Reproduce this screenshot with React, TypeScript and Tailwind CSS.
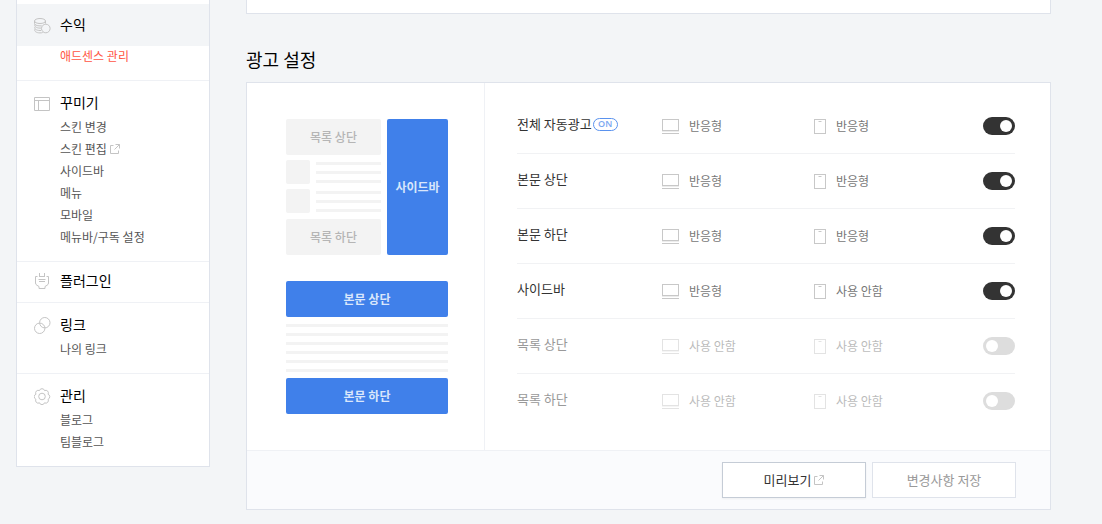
import type { ReactNode } from "react";

type MenuItem = { label: string; active?: boolean; external?: boolean };

type MenuSection = {
  title: string;
  icon: ReactNode;
  active?: boolean;
  items: MenuItem[];
};

type AdSlot = {
  id: string;
  label: string;
  auto?: boolean;
  desktop: string;
  mobile: string;
  enabled: boolean;
};

const iconProps = {
  width: 17,
  height: 17,
  viewBox: "0 0 17 17",
  fill: "none",
  stroke: "currentColor",
  "aria-hidden": true,
};

const CoinsIcon = () => (
  <svg {...iconProps}>
    <ellipse cx="6" cy="4" rx="5.500" ry="2.500" />
    <path d="M.5 4v2.500c0 1.300 2.400 2.400 5.500 2.400.6 0 1.200 0 1.700-.1M11.500 4v2.500M.9 7.300c-.9 2 1.400 3.800 5.100 3.800h1M.9 9.800c-.9 2 1.400 3.700 5.100 3.700h1M.9 12.200c-.9 2 1.400 3.700 5.100 3.700 1 0 1.900-.1 2.700-.4" />
    <circle cx="11.800" cy="11.500" r="4.300" />
  </svg>
);

const LayoutIcon = () => (
  <svg {...iconProps}>
    <path d="M.5 2.500h15v13H.5zM.5 5.500h15M4.500 5.500v10" />
  </svg>
);

const PlugIcon = () => (
  <svg {...iconProps}>
    <path d="M5.500 0v4M10.500 0v4M3.500 3.500h-2v6.500q0 1.500 1.500 2.300l2 1.200v2h6v-2l2-1.200q1.500-.8 1.500-2.300v-6.500h-2M5.500 3.500h5M4.500 6.500h7M5 8.500h6" />
  </svg>
);

const LinkIcon = () => (
  <svg {...iconProps}>
    <circle cx="10.800" cy="5.700" r="5.200" />
    <circle cx="5.700" cy="11.300" r="5.200" />
  </svg>
);

const GearIcon = () => (
  <svg {...iconProps}>
    <circle cx="8" cy="8.500" r="3.300" />
    <path
      strokeLinejoin="round"
      d="M6.300 1.200q1.700-1 3.400 0l.8 1.400 1.700-.3q1.900.5 2.200 2.300l-.3 1.700 1.200.8q1 1.600 0 3.200l-1.200 1 .3 1.600q-.4 1.800-2.200 2.300l-1.700-.4-.8 1.300q-1.700 1-3.400 0l-.8-1.300-1.700.4q-1.800-.5-2.200-2.300l.3-1.600-1.200-1q-1-1.600 0-3.200l1.200-.8-.3-1.700q.3-1.800 2.200-2.300l1.700.3z"
    />
  </svg>
);

const ExternalIcon = () => (
  <svg
    className="text-[#c4c4c4]"
    width="10"
    height="10"
    viewBox="0 0 10 10"
    fill="none"
    stroke="currentColor"
    aria-hidden
  >
    <path d="M3.500 1.500h-3v8h8v-3M5.500.5h4v4M9.500.5l-5 5" />
  </svg>
);

const DesktopIcon = () => (
  <svg width="17" height="15" viewBox="0 0 17 15" fill="none" aria-hidden>
    <path d="M1 11.500h15" stroke="#e0e0e0" />
    <rect x=".5" y=".5" width="16" height="11" stroke="#c8c8c8" />
    <path d="M0 12.500h17" stroke="#ececec" />
    <path d="M0 14.500h17" stroke="#c8c8c8" />
  </svg>
);

const MobileIcon = () => (
  <svg width="12" height="15" viewBox="0 0 12 15" fill="none" aria-hidden>
    <rect x=".5" y=".5" width="11" height="14" stroke="#c8c8c8" />
    <path d="M4.500 2.500h3" stroke="#c8c8c8" />
  </svg>
);

const sections: MenuSection[] = [
  {
    title: "수익",
    icon: <CoinsIcon />,
    active: true,
    items: [{ label: "애드센스 관리", active: true }],
  },
  {
    title: "꾸미기",
    icon: <LayoutIcon />,
    items: [
      { label: "스킨 변경" },
      { label: "스킨 편집", external: true },
      { label: "사이드바" },
      { label: "메뉴" },
      { label: "모바일" },
      { label: "메뉴바/구독 설정" },
    ],
  },
  { title: "플러그인", icon: <PlugIcon />, items: [] },
  { title: "링크", icon: <LinkIcon />, items: [{ label: "나의 링크" }] },
  {
    title: "관리",
    icon: <GearIcon />,
    items: [{ label: "블로그" }, { label: "팀블로그" }],
  },
];

const slots: AdSlot[] = [
  { id: "auto", label: "전체 자동광고", auto: true, desktop: "반응형", mobile: "반응형", enabled: true },
  { id: "body-top", label: "본문 상단", desktop: "반응형", mobile: "반응형", enabled: true },
  { id: "body-bottom", label: "본문 하단", desktop: "반응형", mobile: "반응형", enabled: true },
  { id: "sidebar", label: "사이드바", desktop: "반응형", mobile: "사용 안함", enabled: true },
  { id: "list-top", label: "목록 상단", desktop: "사용 안함", mobile: "사용 안함", enabled: false },
  { id: "list-bottom", label: "목록 하단", desktop: "사용 안함", mobile: "사용 안함", enabled: false },
];

function headingClass(section: MenuSection) {
  if (section.active) return "h-[42px] pb-0.5 bg-[#f3f5f7]";
  return section.items.length ? "h-9 pt-1.5" : "h-10 pb-1";
}

function Sidebar() {
  return (
    <nav className="w-[194px] shrink-0 border-x border-b border-[#dfe3eb] bg-white pt-1">
      {sections.map((section, i) => (
        <section key={section.title} className={i > 0 ? "border-t border-[#eff1f5]" : ""}>
          <h2 className={`flex items-center gap-[9px] pl-[17px] text-sm text-black ${headingClass(section)}`}>
            <span className="pt-0.5 text-[#c4c4c4]">{section.icon}</span>
            <a href="#">{section.title}</a>
          </h2>
          {section.items.length > 0 && (
            <ul className="-mt-px pb-[13px] pl-[43px] text-xs leading-[22px]">
              {section.items.map((item) => (
                <li key={item.label}>
                  <a
                    href="#"
                    className={`flex items-center gap-[3px] ${item.active ? "text-[#ff5544]" : "text-[#555]"}`}
                  >
                    {item.label}
                    {item.external && <ExternalIcon />}
                  </a>
                </li>
              ))}
            </ul>
          )}
        </section>
      ))}
    </nav>
  );
}

function Lines({ count }: { count: number }) {
  return (
    <div className="flex flex-1 flex-col gap-1.5">
      {Array.from({ length: count }, (_, i) => (
        <div key={i} className="h-[3px] bg-[#f3f3f3]" />
      ))}
    </div>
  );
}

function Block({ label, on }: { label: string; on?: boolean }) {
  return (
    <div
      className={`flex h-9 items-center justify-center rounded-xs pb-px text-xs ${
        on ? "bg-[#4080ea] font-bold text-[#d9e6fb]" : "bg-[#f3f3f3] font-medium text-[#b5b5b5]"
      }`}
    >
      {label}
    </div>
  );
}

function Preview() {
  return (
    <div className="w-[238px] shrink-0 border-r border-[#eff1f5] py-9 pr-9 pl-[39px]">
      <div className="flex gap-1.5">
        <div className="w-[95px]">
          <Block label="목록 상단" />
          {[0, 1].map((n) => (
            <div key={n} className="mt-[5px] flex items-center gap-1.5">
              <div className="size-6 rounded-xs bg-[#f3f3f3]" />
              <Lines count={3} />
            </div>
          ))}
          <div className="mt-1.5">
            <Block label="목록 하단" />
          </div>
        </div>
        <div className="flex flex-1 items-center justify-center rounded-xs bg-[#4080ea] pb-px text-xs font-bold text-[#d9e6fb]">
          사이드바
        </div>
      </div>
      <div className="mt-[26px]">
        <Block label="본문 상단" on />
        <div className="flex pt-[7px] pb-1.5">
          <Lines count={6} />
        </div>
        <Block label="본문 하단" on />
      </div>
    </div>
  );
}

function SlotRow({ slot }: { slot: AdSlot }) {
  const faded = slot.enabled ? "" : "opacity-50";
  return (
    <li className="flex h-[55px] items-center border-b border-[#f1f2f4] last:border-transparent">
      <label
        htmlFor={slot.id}
        className={`flex w-[145px] items-center gap-px pb-1 text-[13px] ${
          slot.enabled ? "text-[#333]" : "text-[#999]"
        }`}
      >
        {slot.label}
        {slot.auto && (
          <span className="flex h-[13px] w-[25px] items-center justify-center rounded-full border border-[#5a92ee] font-['Open_Sans',sans-serif] text-[9px] font-semibold text-[#7aa7f1]">
            ON
          </span>
        )}
      </label>
      <div className={`flex w-[152px] items-center gap-2.5 text-xs text-[#777] ${faded}`}>
        <DesktopIcon />
        {slot.desktop}
      </div>
      <div className={`flex items-center gap-2.5 text-xs text-[#777] ${faded}`}>
        <MobileIcon />
        {slot.mobile}
      </div>
      <input
        id={slot.id}
        type="checkbox"
        defaultChecked={slot.enabled}
        className="ml-auto h-[18px] w-8 cursor-pointer appearance-none rounded-full bg-[#ddd] p-[3px] before:block before:size-3 before:rounded-full before:bg-white checked:bg-[#333] checked:before:translate-x-[14px]"
      />
    </li>
  );
}

export default function App() {
  return (
    <div className="flex min-h-screen items-start gap-9 bg-[#f3f5f7] pr-[51px] pl-4 font-['Noto_Sans_CJK_KR',sans-serif]">
      <Sidebar />
      <main className="min-w-0 flex-1">
        <div className="h-3.5 border-x border-b border-[#dfe3eb] bg-white" />
        <h1 className="mt-[31px] mb-[9px] text-lg leading-7 text-black">광고 설정</h1>
        <form className="border border-[#dfe3eb] bg-white">
          <div className="flex">
            <Preview />
            <ul className="flex-1 pt-4 pr-[35px] pl-8">
              {slots.map((slot) => (
                <SlotRow key={slot.id} slot={slot} />
              ))}
            </ul>
          </div>
          <div className="flex justify-end gap-1.5 border-t border-[#eff1f5] bg-[#fafbfd] py-[11px] pr-[34px]">
            <button
              type="button"
              className="flex h-9 w-36 items-center justify-center gap-[3px] border border-[#c5ccd6] bg-white pb-px text-[13px] text-[#333] shadow-xs"
            >
              미리보기
              <ExternalIcon />
            </button>
            <button
              type="submit"
              className="h-9 w-36 border border-[#dfe3eb] bg-white pb-px text-[13px] text-[#999]"
            >
              변경사항 저장
            </button>
          </div>
        </form>
      </main>
    </div>
  );
}
